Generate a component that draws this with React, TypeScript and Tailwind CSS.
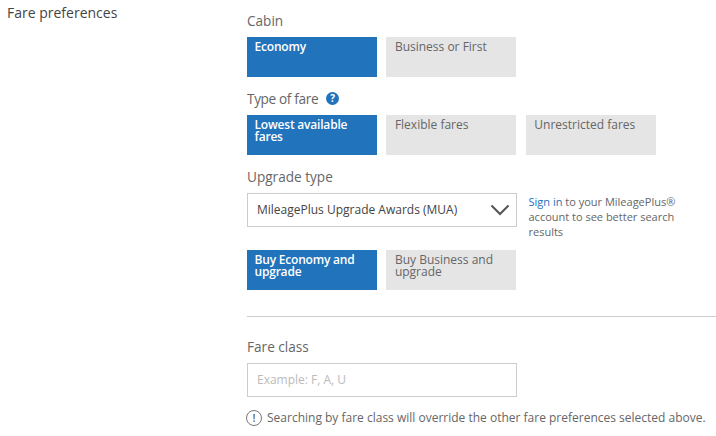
function Choice({ label, active }: { label: string; active?: boolean }) {
  return (
    <div
      className={`w-[130px] h-10 pr-1 pt-[4px] text-xs leading-[12px] ${
        active
          ? 'pl-[7.5px] bg-[#2173bc] text-white font-semibold tracking-[-0.2px]'
          : 'pl-[8.5px] bg-[#e5e5e5] text-[#666666]'
      }`}
    >
      {label}
    </div>
  );
}

export default function App() {
  return (
    <div className="w-[716px] h-[436px] overflow-hidden bg-white flex font-['Open_Sans',sans-serif] text-[#666666]">
      <div className="w-[247px] pl-[7px] pt-[3px] text-sm leading-[19px] text-[#444444]">Fare preferences</div>

      <div className="flex-1 pt-[11px]">
        <div className="text-[13.6px] leading-[19px]">Cabin</div>
        <div className="flex gap-[9.4px] mt-[7px]">
          <Choice label="Economy" active />
          <Choice label="Business or First" />
        </div>

        <div className="flex items-center gap-[8px] mt-[12px] text-[13.6px] tracking-[-0.35px] leading-[19px]">
          Type of fare
          <span className="w-[13px] h-[13px] rounded-full bg-[#2173bc] text-white text-[10px] tracking-normal leading-[13px] font-bold text-center">?</span>
        </div>
        <div className="flex gap-[9.4px] mt-[7px]">
          <Choice label="Lowest available fares" active />
          <Choice label="Flexible fares" />
          <Choice label="Unrestricted fares" />
        </div>

        <div className="text-[13.6px] leading-[19px] mt-[12px]">Upgrade type</div>
        <div className="flex h-[46px] mt-[7px]">
          <div className="w-[270px] h-[34px] border border-[#cccccc] pl-[9px] pr-[6px] pb-px flex items-center justify-between text-xs text-[#444444]">
            MileagePlus Upgrade Awards (MUA)
            <svg width="20" height="12" viewBox="0 0 20 12" fill="none" stroke="#555555" strokeWidth="2" className="mt-px">
              <path d="M1.5 1.5 L10 10 L18.5 1.5" />
            </svg>
          </div>
          <p className="ml-[11.5px] w-[170px] pt-px text-[11px] leading-[15px] text-[#666666]">
            <span className="text-[#2173bc]">Sign in</span> to your MileagePlus® account to see better search results
          </p>
        </div>

        <div className="flex gap-[9.4px] mt-[11px]">
          <Choice label="Buy Economy and upgrade" active />
          <Choice label="Buy Business and upgrade" />
        </div>

        <div className="h-px bg-[#cccccc] mt-[26px]" />

        <div className="text-[13.6px] leading-[19px] mt-[20px]">Fare class</div>
        <div className="w-[270px] h-[34px] border border-[#cccccc] pl-[9px] flex items-center text-xs text-[#bbbbbb] mt-[7px]">
          Example: F, A, U
        </div>

        <div className="flex items-center gap-[5px] mt-[13px] -ml-px text-xs text-[#666666]">
          <span className="w-4 h-4 rounded-full border border-[#777777] text-[11px] font-semibold leading-[14px] text-center">!</span>
          Searching by fare class will override the other fare preferences selected above.
        </div>
      </div>
    </div>
  );
}
